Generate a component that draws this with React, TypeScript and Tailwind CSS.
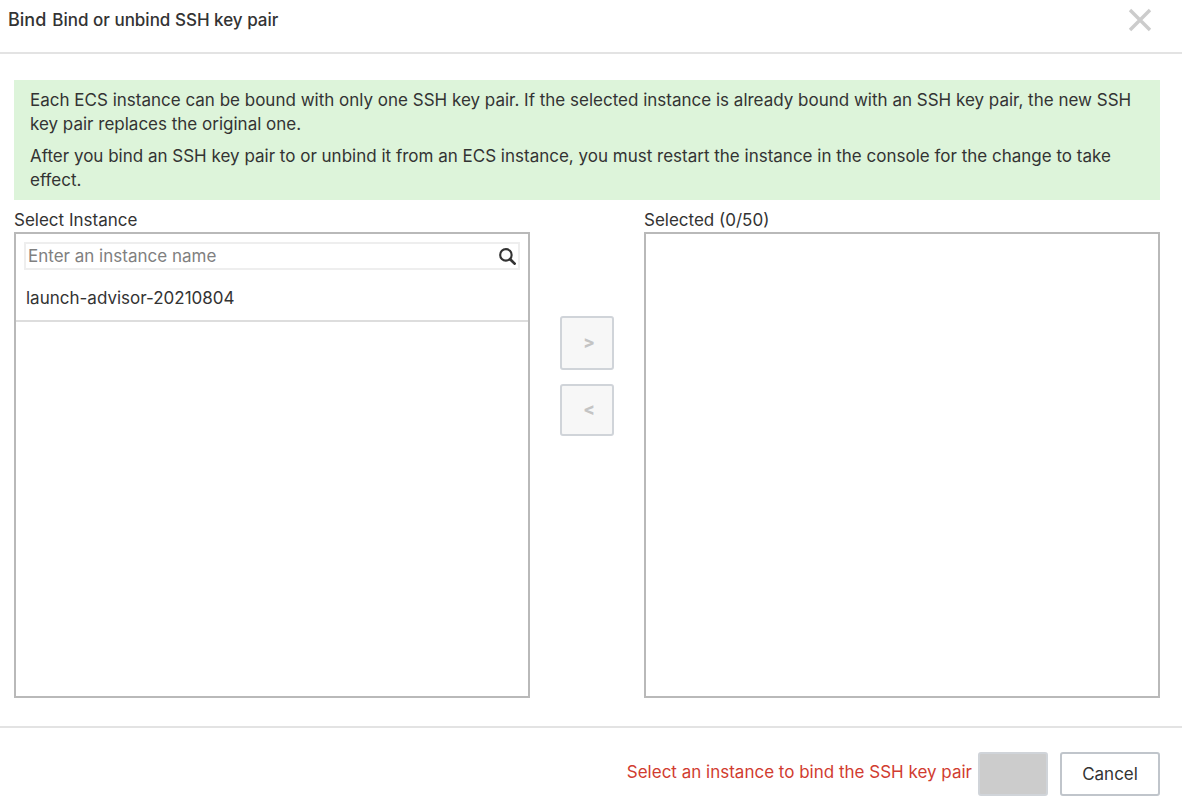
export default function App() {
  return (
    <div
      role="dialog"
      aria-labelledby="dialog-title"
      className="bg-white font-['Inter','Liberation_Sans',sans-serif] text-[17px] leading-6 text-[#333]"
    >
      <header className="flex h-[54px] items-start justify-between border-b-2 border-[#e3e3e3] pt-2 pr-[30px] pl-2">
        <h1 id="dialog-title" className="flex items-baseline gap-1.5 font-medium">
          <span className="text-lg leading-6">Bind</span>
          <span>Bind or unbind SSH key pair</span>
        </h1>
        <button type="button" aria-label="Close" className="flex h-6 w-6 items-center justify-center text-[#ccc]">
          <svg viewBox="0 0 24 24" className="h-6 w-6" fill="none" stroke="currentColor" strokeWidth="3.4">
            <path d="M2 2 22 22M22 2 2 22" />
          </svg>
        </button>
      </header>

      <main className="pt-[26px] pr-[22px] pb-7 pl-3.5">
        <div className="space-y-2 bg-[#ddf4da] px-4 py-2">
          <p>
            Each ECS instance can be bound with only one SSH key pair. If the selected instance is already bound with an
            SSH key pair, the new SSH key pair replaces the original one.
          </p>
          <p>
            After you bind an SSH key pair to or unbind it from an ECS instance, you must restart the instance in the
            console for the change to take effect.
          </p>
        </div>

        <div className="flex gap-[30px] pt-2">
          <section className="min-w-0 flex-1">
            <h2>Select Instance</h2>
            <div className="h-[466px] border-2 border-[#b9b9b9]">
              <form className="m-2 flex h-7 items-center border-2 border-[#eee] pr-0.5 pl-0.5" role="search">
                <input
                  type="text"
                  aria-label="Instance name"
                  placeholder="Enter an instance name"
                  className="h-6 min-w-0 flex-1 outline-none placeholder:text-[#808080]"
                />
                <button type="button" aria-label="Search" className="text-[#333]">
                  <svg viewBox="0 0 16 16" className="h-[17px] w-[17px]" fill="none" stroke="currentColor">
                    <circle cx="6.5" cy="6.5" r="5.4" strokeWidth="2" />
                    <path d="m10.5 10.5 4.2 4.2" strokeWidth="2.6" strokeLinecap="round" />
                  </svg>
                </button>
              </form>
              <ul>
                <li className="border-b-2 border-[#ddd] px-2.5 pt-2 pb-2.5">
                  <span>launch-advisor-20210804</span>
                </li>
              </ul>
            </div>
          </section>

          <div className="flex w-[54px] flex-col gap-3.5 pt-[108px] font-extrabold">
            <button
              type="button"
              disabled
              aria-label="Add"
              className="h-[54px] rounded-[3px] border-2 border-[#d0d4d9] bg-[#f7f7f7] pb-0.5 pl-1 text-[#c4c4c4]"
            >
              &gt;
            </button>
            <button
              type="button"
              disabled
              aria-label="Remove"
              className="h-[52px] rounded-[3px] border-2 border-[#d0d4d9] bg-[#f7f7f7] pb-0.5 pl-1 text-[#c4c4c4]"
            >
              &lt;
            </button>
          </div>

          <section className="min-w-0 flex-1">
            <h2>Selected (0/50)</h2>
            <div className="h-[466px] border-2 border-[#b9b9b9]" />
          </section>
        </div>
      </main>

      <footer className="flex items-center justify-end border-t-2 border-[#e3e3e3] pt-6 pr-[22px] pb-4">
        <p className="pr-1.5 pb-1 text-[#d13c30]">Select an instance to bind the SSH key pair</p>
        <button
          type="button"
          disabled
          aria-label="Confirm"
          className="h-11 w-[70px] rounded-[3px] border-2 border-[#d0d4d9] bg-[#ccc]"
        />
        <button type="button" className="ml-3 h-11 w-[100px] rounded-[3px] border-2 border-[#c0c5cb] bg-white">
          Cancel
        </button>
      </footer>
    </div>
  );
}
